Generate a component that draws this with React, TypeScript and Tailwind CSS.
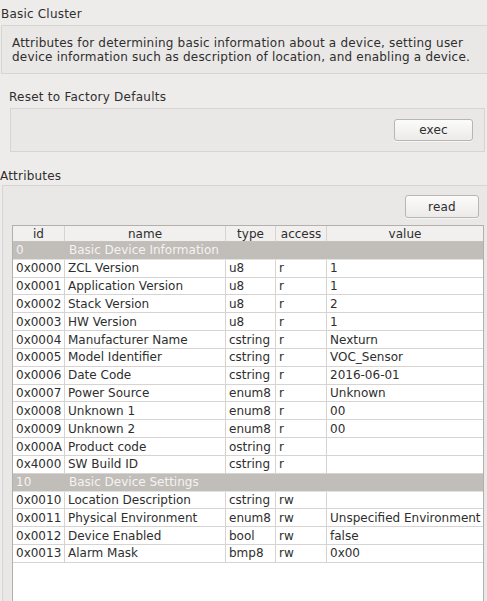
import React from "react";

type Row = { id: string; name: string; type?: string; access?: string; value?: string; section?: boolean };

const rows: Row[] = [
  { id: "0", name: "Basic Device Information", section: true },
  { id: "0x0000", name: "ZCL Version", type: "u8", access: "r", value: "1" },
  { id: "0x0001", name: "Application Version", type: "u8", access: "r", value: "1" },
  { id: "0x0002", name: "Stack Version", type: "u8", access: "r", value: "2" },
  { id: "0x0003", name: "HW Version", type: "u8", access: "r", value: "1" },
  { id: "0x0004", name: "Manufacturer Name", type: "cstring", access: "r", value: "Nexturn" },
  { id: "0x0005", name: "Model Identifier", type: "cstring", access: "r", value: "VOC_Sensor" },
  { id: "0x0006", name: "Date Code", type: "cstring", access: "r", value: "2016-06-01" },
  { id: "0x0007", name: "Power Source", type: "enum8", access: "r", value: "Unknown" },
  { id: "0x0008", name: "Unknown 1", type: "enum8", access: "r", value: "00" },
  { id: "0x0009", name: "Unknown 2", type: "enum8", access: "r", value: "00" },
  { id: "0x000A", name: "Product code", type: "ostring", access: "r", value: "" },
  { id: "0x4000", name: "SW Build ID", type: "cstring", access: "r", value: "" },
  { id: "10", name: "Basic Device Settings", section: true },
  { id: "0x0010", name: "Location Description", type: "cstring", access: "rw", value: "" },
  { id: "0x0011", name: "Physical Environment", type: "enum8", access: "rw", value: "Unspecified Environment" },
  { id: "0x0012", name: "Device Enabled", type: "bool", access: "rw", value: "false" },
  { id: "0x0013", name: "Alarm Mask", type: "bmp8", access: "rw", value: "0x00" },
];

const cell = "h-[17.83px] flex items-center pl-[3px] whitespace-nowrap overflow-hidden border-b border-[#d6d3d0]";
const scell = "h-[17.83px] flex items-center pl-[3px] whitespace-nowrap overflow-hidden border-b border-[#e4e2e0]";

function Button({ label, w, h }: { label: string; w: string; h: string }) {
  return (
    <div
      className={`${w} ${h} flex items-center justify-center rounded-[3px] border border-[#b9b5b1] bg-gradient-to-b from-[#fbfbfa] to-[#ecebea] text-[#2e2e2e] tracking-[0.2px] shadow-[0_1px_0_rgba(255,255,255,0.6)]`}
    >
      {label}
    </div>
  );
}

export default function App() {
  return (
    <div className="w-[487px] h-[601px] overflow-hidden bg-[#eeecea] text-[#2e2e2e] text-[12px] leading-[14px] font-['DejaVu_Sans',sans-serif]">
      <div className="pt-[7px] pl-[1px] h-[21px] tracking-[0.2px]">Basic Cluster</div>
      <div className="mt-[4px] ml-[1px] w-[520px] h-[49px] border border-[#d7d4d1] bg-[#eae8e6] pt-[10px] pl-[10px] tracking-[0.2px]">
        <div>Attributes for determining basic information about a device, setting user</div>
        <div>device information such as description of location, and enabling a device.</div>
      </div>

      <div className="mt-[16px] pl-[9px] h-[14px] tracking-[0.25px]">Reset to Factory Defaults</div>
      <div className="mt-[4px] ml-[10px] w-[475px] h-[44px] border border-[#d7d4d1] bg-[#eae8e6] flex justify-end items-start pt-[10px] pr-[11px]">
        <Button label="exec" w="w-[79px]" h="h-[22px]" />
      </div>

      <div className="mt-[17px] h-[14px] tracking-[0.2px]">Attributes</div>
      <div className="mt-[2px] ml-[2px] w-[520px] h-[420px] border border-[#d7d4d1] bg-[#eae8e6] pt-[9px] pl-[9px]">
        <div className="w-[472px] flex justify-end pr-[5px]">
          <Button label="read" w="w-[74px]" h="h-[23px]" />
        </div>
        <div className="mt-[7px] w-[472px] h-[400px] border border-[#b3afab] bg-white">
          <div className="grid grid-cols-[52px_161px_50px_51px_156px] bg-[#f1f0ef]">
            {["id", "name", "type", "access", "value"].map((h, i) => (
              <div
                key={h}
                className={`h-[16px] flex items-center justify-center border-b border-[#c4c0bc] ${i < 4 ? "border-r border-r-[#d6d3d0]" : ""}`}
              >
                {h}
              </div>
            ))}
          </div>
          {rows.map((r) =>
            r.section ? (
              <div key={r.id} className="grid grid-cols-[52px_161px_50px_51px_156px] bg-[#c1bdb9] text-[#f4f3f2]">
                <div className={scell}>{r.id}</div>
                <div className={`${scell} pl-[4px]`}>{r.name}</div>
                <div className={scell}></div>
                <div className={scell}></div>
                <div className={scell}></div>
              </div>
            ) : (
              <div key={r.id} className="grid grid-cols-[52px_161px_50px_51px_156px]">
                <div className={`${cell} border-r`}>{r.id}</div>
                <div className={`${cell} border-r`}>{r.name}</div>
                <div className={`${cell} border-r`}>{r.type}</div>
                <div className={`${cell} border-r`}>{r.access}</div>
                <div className={cell}>{r.value}</div>
              </div>
            )
          )}
        </div>
      </div>
    </div>
  );
}
